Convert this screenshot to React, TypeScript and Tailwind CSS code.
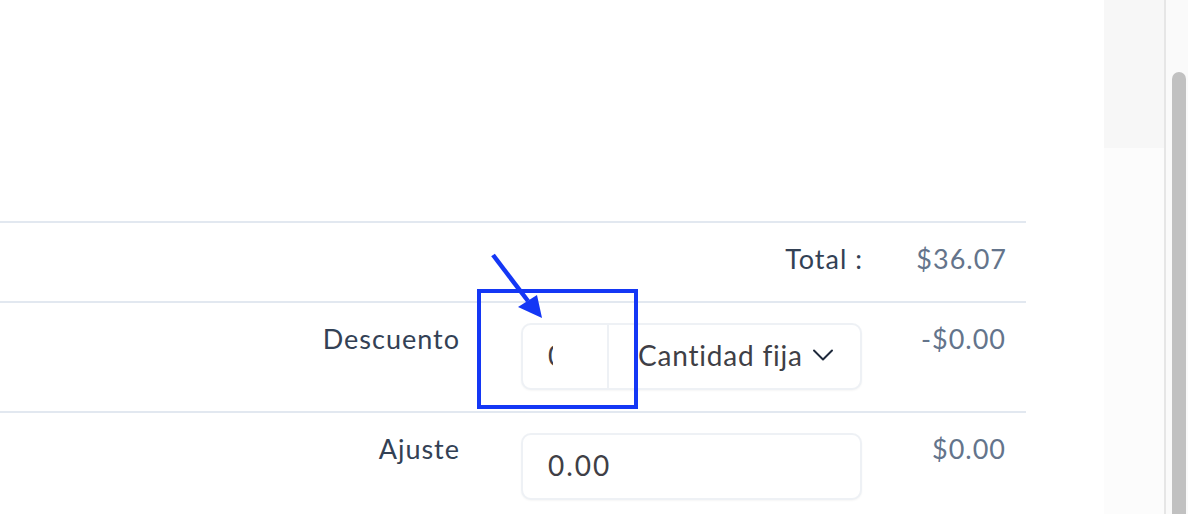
import { ChevronDown } from "lucide-react";

const font = { fontFamily: "Lato, 'Open Sans', sans-serif" };

function Row({
  label,
  amount,
  children,
  className = "",
}: {
  label: string;
  amount: string;
  children?: React.ReactNode;
  className?: string;
}) {
  return (
    <div className={`flex items-start border-t-2 border-[#e2e8f0] ${className}`}>
      <div className="w-[460px] shrink-0 text-right text-[27px] leading-[36px] tracking-[1px] text-[#334155]">
        {label}
      </div>
      <div className="ml-[61px] w-[341px] shrink-0">{children}</div>
      <div className="w-[144px] shrink-0 text-right text-[27px] leading-[36px] tracking-[1px] text-[#64748b]">
        {amount}
      </div>
    </div>
  );
}

export default function App() {
  return (
    <div
      className="relative flex h-[514px] w-[1188px] overflow-hidden bg-white"
      style={font}
    >
      {/* contenido principal */}
      <div className="w-[1104px] shrink-0">
        <div className="w-[1026px] pt-[221px]">
          {/* Total */}
          <div className="flex h-[80px] items-start border-t-2 border-[#e2e8f0] pt-[18px]">
            <div className="w-[863px] text-right text-[27px] leading-[36px] tracking-[1px] text-[#334155]">
              Total :
            </div>
            <div className="w-[144px] text-right text-[27px] leading-[36px] tracking-[1px] text-[#64748b]">
              $36.07
            </div>
          </div>

          {/* Descuento */}
          <Row label="Descuento" amount="-$0.00" className="h-[110px] pt-[18px]">
            <div className="mt-[2px] flex h-[67px] w-[341px] items-stretch rounded-[10px] border-2 border-[#eef1f5] bg-white shadow-[0_1px_2px_rgba(0,0,0,0.04)]">
              <div className="flex w-[86px] items-center border-r-2 border-[#eef1f5] pb-[3px] pl-[25px]">
                <div className="w-[5px] overflow-hidden text-[28px] text-[#3f3f46]">0</div>
              </div>
              <div className="flex flex-1 items-center pb-[3px] pl-[29px] text-[28px] tracking-[0.8px] text-[#3f3f46]">
                Cantidad fija
                <ChevronDown className="ml-[2px] h-[36px] w-[36px] text-[#1e293b]" strokeWidth={1.3} />
              </div>
            </div>
          </Row>

          {/* Ajuste */}
          <Row label="Ajuste" amount="$0.00" className="h-[110px] pt-[18px]">
            <div className="mt-[2px] flex h-[67px] w-[341px] items-center rounded-[10px] border-2 border-[#eef1f5] bg-white pb-[3px] pl-[25px] text-[28px] tracking-[2px] text-[#3f3f46] shadow-[0_1px_2px_rgba(0,0,0,0.04)]">
              0.00
            </div>
          </Row>
        </div>
      </div>

      {/* panel lateral */}
      <div className="flex w-[60px] shrink-0 flex-col">
        <div className="h-[148px] bg-[#f7f7f7]" />
        <div className="flex-1 bg-[#fcfcfc]" />
      </div>
      <div className="w-[2px] shrink-0 bg-[#e6e6e6]" />
      <div className="w-[22px] shrink-0 bg-[#fafafa] pl-[6px] pt-[72px]">
        <div className="h-[460px] w-[14px] rounded-t-full bg-[#c1c1c1]" />
      </div>

      {/* anotación */}
      <div className="absolute left-[477px] top-[289px] h-[120px] w-[161px] border-4 border-[#1437f5]" />
      <svg className="absolute left-0 top-0" width="1188" height="514">
        <line x1="493" y1="255" x2="528" y2="301" stroke="#1437f5" strokeWidth="4.5" />
        <polygon points="542,318 518,307 537,295" fill="#1437f5" />
      </svg>
    </div>
  );
}
